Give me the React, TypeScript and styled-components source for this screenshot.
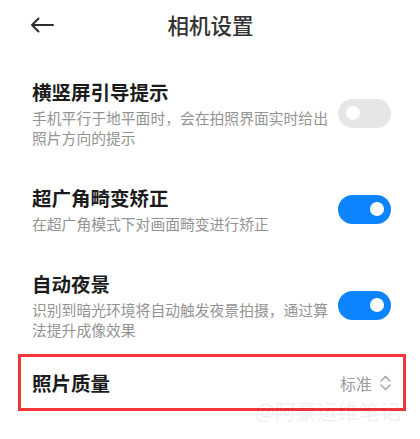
import React from "react";
import styled, { createGlobalStyle } from "styled-components";

const Global = createGlobalStyle`
  html, body { margin: 0; padding: 0; background: #ffffff; }
  body { font-family: "Noto Sans CJK SC", "Noto Sans", sans-serif; }
  * { box-sizing: border-box; }
`;

const Page = styled.div`
  position: relative;
  width: 420px;
  height: 439px;
  overflow: hidden;
  background: #ffffff;
`;

const Header = styled.header`
  position: relative;
  height: 50px;
  display: flex;
  align-items: center;
  justify-content: center;
`;

const BackButton = styled.button`
  position: absolute;
  left: 30px;
  top: 17px;
  width: 24px;
  height: 16px;
  padding: 0;
  border: none;
  background: none;
  display: flex;
`;

const HeaderTitle = styled.h1`
  margin: 0;
  font-size: 21.5px;
  font-weight: 500;
  color: #333333;
  line-height: 30px;
  letter-spacing: 0;
  padding-left: 1px;
`;

const List = styled.div`
  display: flex;
  flex-direction: column;
  padding-top: 10px;
`;

const Row = styled.div`
  display: flex;
  align-items: center;
  padding: 18.5px 29px 18.5px 32px;
`;

const TextBlock = styled.div`
  flex: 1;
  display: flex;
  flex-direction: column;
  gap: 3px;
  margin-right: 6px;
`;

const Title = styled.div`
  font-size: 19.5px;
  font-weight: 700;
  color: #1b1b1b;
  line-height: 26px;
`;

const Desc = styled.div`
  font-size: 14.8px;
  color: #939393;
  line-height: 20px;
`;

const Track = styled.div<{ $on: boolean }>`
  flex: none;
  width: 53px;
  height: 29px;
  border-radius: 14.5px;
  background: ${(p) => (p.$on ? "#0d84ff" : "#e6e6e6")};
  display: flex;
  align-items: center;
  justify-content: ${(p) => (p.$on ? "flex-end" : "flex-start")};
  padding: 0 7px 0 8px;
`;

const Knob = styled.div`
  width: 14px;
  height: 14px;
  border-radius: 50%;
  background: #ffffff;
`;

const HighlightRow = styled.div`
  margin: -4px 14px 0 18px;
  height: 57px;
  border: 3px solid #f0363b;
  display: flex;
  align-items: center;
  justify-content: space-between;
  padding: 0 12px 0 11px;
`;

const Value = styled.div`
  display: flex;
  align-items: center;
  gap: 8px;
  font-size: 16px;
  color: #9c9c9c;
  line-height: 22px;
`;

const Watermark = styled.div`
  position: absolute;
  left: 255px;
  top: 396px;
  font-size: 21px;
  line-height: 28px;
  color: rgba(0, 0, 0, 0.075);
  white-space: nowrap;
  pointer-events: none;
`;

const Toggle = ({ on }: { on: boolean }) => (
  <Track $on={on}>
    <Knob />
  </Track>
);

type Item = { title: string; desc: string; on: boolean };

const items: Item[] = [
  {
    title: "横竖屏引导提示",
    desc: "手机平行于地平面时，会在拍照界面实时给出照片方向的提示",
    on: false,
  },
  {
    title: "超广角畸变矫正",
    desc: "在超广角模式下对画面畸变进行矫正",
    on: true,
  },
  {
    title: "自动夜景",
    desc: "识别到暗光环境将自动触发夜景拍摄，通过算法提升成像效果",
    on: true,
  },
];

export default function App() {
  return (
    <Page>
      <Global />
      <Header>
        <BackButton aria-label="返回">
          <svg width="24" height="16" viewBox="0 0 24 16" fill="none">
            <path
              d="M23 8H2M8.5 1.5L2 8l6.5 6.5"
              stroke="#2e2e2e"
              strokeWidth="2"
              strokeLinecap="round"
              strokeLinejoin="round"
            />
          </svg>
        </BackButton>
        <HeaderTitle>相机设置</HeaderTitle>
      </Header>
      <List>
        {items.map((it) => (
          <Row key={it.title}>
            <TextBlock>
              <Title>{it.title}</Title>
              <Desc>{it.desc}</Desc>
            </TextBlock>
            <Toggle on={it.on} />
          </Row>
        ))}
        <HighlightRow>
          <Title>照片质量</Title>
          <Value>
            标准
            <svg width="11" height="16" viewBox="0 0 11 16" fill="none">
              <path
                d="M1 6l4.5-4.5L10 6M1 10l4.5 4.5L10 10"
                stroke="#a8a8a8"
                strokeWidth="1.6"
                strokeLinecap="round"
                strokeLinejoin="round"
              />
            </svg>
          </Value>
        </HighlightRow>
      </List>
      <Watermark>@阿豪运维笔记</Watermark>
    </Page>
  );
}
